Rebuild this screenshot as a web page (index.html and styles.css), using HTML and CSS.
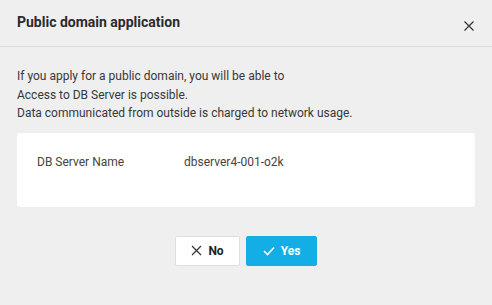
FILE: index.html
```html
<!DOCTYPE html>
<html>
<head>
    <title>Public domain application</title>
    <link rel="stylesheet" href="styles.css">
</head>
<body>
    <div class="dialog">
        <div class="dialog-header">
            <h2 class="dialog-title">Public domain application</h2>
            <button class="close-btn" aria-label="close">
                <svg width="10" height="10" viewBox="0 0 10 10">
                    <path d="M0.5 0.5 L9.5 9.5 M9.5 0.5 L0.5 9.5" stroke="#333" stroke-width="1.2" fill="none"/>
                </svg>
            </button>
        </div>

        <div class="dialog-body">
            <p class="notice">
                If you apply for a public domain, you will be able to<br>
                Access to DB Server is possible.<br>
                Data communicated from outside is charged to network usage.
            </p>

            <div class="info-card">
                <div class="info-row">
                    <span class="info-label">DB Server Name</span>
                    <span class="info-value">dbserver4-001-o2k</span>
                </div>
            </div>

            <div class="actions">
                <button class="btn btn-no">
                    <svg width="11" height="11" viewBox="0 0 11 11">
                        <path d="M1 1 L10 10 M10 1 L1 10" stroke="#333" stroke-width="1.2" fill="none"/>
                    </svg>
                    No
                </button>
                <button class="btn btn-yes">
                    <svg width="12" height="10" viewBox="0 0 12 10">
                        <path d="M1 5 L4.5 8.5 L11 1.5" stroke="#fff" stroke-width="1.6" fill="none"/>
                    </svg>
                    Yes
                </button>
            </div>
        </div>
    </div>
</body>
</html>
```

FILE: styles.css
```css
body {
    margin: 0;
    background: #efefef;
    font-family: Roboto, "Liberation Sans", sans-serif;
    color: #333;
}

.dialog {
    width: 492px;
    height: 305px;
}

.dialog-header {
    display: flex;
    align-items: center;
    justify-content: space-between;
    height: 47px;
    padding: 0 17px;
    border-bottom: 1px solid #dcdcdc;
    box-sizing: border-box;
}

.dialog-title {
    margin: 0;
    font-size: 14px;
    font-weight: bold;
    color: #2b2b2b;
    padding-bottom: 2px;
}

.close-btn {
    background: none;
    border: none;
    padding: 0;
    margin-right: 1px;
    margin-top: 5px;
    cursor: pointer;
    display: flex;
}

.dialog-body {
    padding: 20px 17px 0;
}

.notice {
    margin: 0 0 10px;
    font-size: 12px;
    line-height: 18.5px;
    color: #383838;
}

.info-card {
    background: #fff;
    border-radius: 3px;
    height: 74px;
    padding: 22px 20px 0;
    box-sizing: border-box;
}

.info-row {
    display: flex;
    font-size: 12px;
    color: #444;
}

.info-label {
    width: 147px;
}

.actions {
    display: flex;
    justify-content: center;
    gap: 6px;
    margin-top: 29px;
}

.btn {
    display: flex;
    align-items: center;
    justify-content: center;
    gap: 6px;
    height: 30px;
    font-family: Roboto, "Liberation Sans", sans-serif;
    font-size: 12px;
    font-weight: bold;
    border-radius: 2px;
    cursor: pointer;
}

.btn-no {
    width: 65px;
    background: #fff;
    border: 1px solid #dedede;
    color: #222;
}

.btn-yes {
    width: 71px;
    background: #14aee6;
    border: 1px solid #14aee6;
    color: #fff;
}
```
